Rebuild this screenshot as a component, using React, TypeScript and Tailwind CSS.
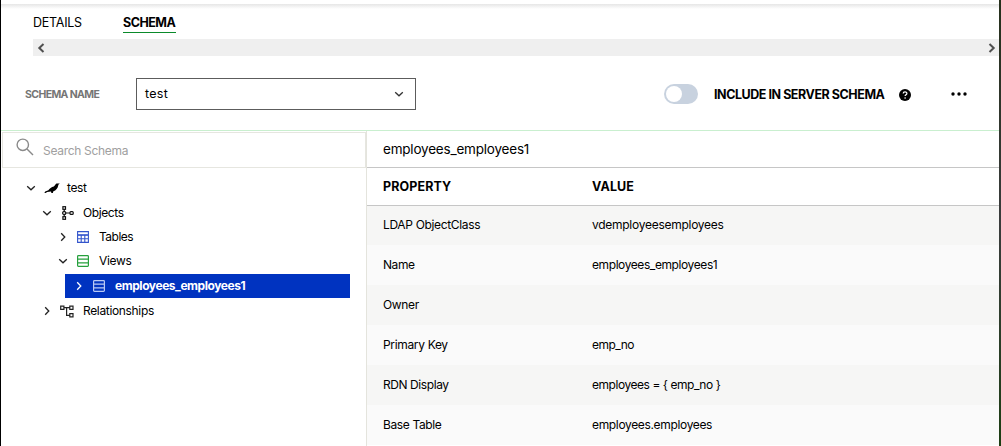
import React from "react";

const INTER = "font-['Inter','Liberation_Sans',sans-serif]";

function Chevron({ dir, className }: { dir: "down" | "right"; className: string }) {
  return (
    <svg viewBox="0 0 10 10" className={`h-[10px] w-[10px] shrink-0 ${className}`} fill="none" stroke="currentColor" strokeWidth="1.3">
      <path d={dir === "down" ? "M1.2 3.2 5 6.8 8.8 3.2" : "M3.2 1.2 6.8 5 3.2 8.8"} />
    </svg>
  );
}

function BirdIcon() {
  return (
    <svg viewBox="0 0 16 12" className="h-3 w-4 shrink-0" fill="#000">
      <path d="M0.4 11 1.2 9.6 4.4 8.2C5.6 6.2 7.4 5 9.8 4.4 11 4 11.2 2.4 12.4 1.6 13.2 1.2 14 1.5 15.8 1.2 15 2 14.5 2.4 14.2 3.4 13.8 6 12 8.4 9.4 9.2L8.8 10.9H7.4L7 9.5 3.2 9.9 1.6 11Z" />
    </svg>
  );
}

function ObjectsIcon() {
  return (
    <svg viewBox="0 0 12 14" className="h-[14px] w-3 shrink-0" fill="none" stroke="#111" strokeWidth="1.2">
      <rect x="0.9" y="0.7" width="2.6" height="2.6" />
      <rect x="0.7" y="5.6" width="3" height="2.8" rx="1" />
      <rect x="0.9" y="10.7" width="2.6" height="2.6" />
      <rect x="8" y="5.6" width="3.2" height="2.8" rx="0.9" />
      <path d="M2.2 3.3v2.3M2.2 8.4v2.3M3.7 7H8" />
    </svg>
  );
}

function TableIcon() {
  return (
    <svg viewBox="0 0 12 12" className="h-3 w-3 shrink-0" fill="none" stroke="#3355cc" strokeWidth="1.1">
      <path d="M0.6 0.6h10.8v10.8H0.6zM0.6 4.3h10.8M0.6 7.8h10.8M4.2 4.3v7.1M7.8 4.3v7.1" />
      <path d="M0.6 3.8h10.8" />
    </svg>
  );
}

function RowsIcon({ className }: { className: string }) {
  return (
    <svg viewBox="0 0 12 12" className={`h-3 w-3 shrink-0 ${className}`} fill="none" stroke="currentColor" strokeWidth="1.2">
      <rect x="0.6" y="0.6" width="10.8" height="10.8" rx="0.8" />
      <path d="M0.6 4.2h10.8M0.6 7.8h10.8" />
    </svg>
  );
}

function RelationsIcon() {
  return (
    <svg viewBox="0 0 14 13" className="h-[13px] w-[14px] shrink-0" fill="none" stroke="#222" strokeWidth="1.2">
      <path d="M0.7 1.2h3.2v3.2H0.7zM9.8 1.2H13v3.2H9.8zM9.8 8.7H13v3.2H9.8zM3.9 2.7h5.9M6.6 2.7v7.6h3.2" />
    </svg>
  );
}

type Node = { label: string; tracking: string; pad: string; height: string; open: boolean; icon: React.ReactNode; gap: string; active?: boolean };

const nodes: Node[] = [
  { label: "test", tracking: "tracking-[-0.35px]", pad: "pl-[25px]", height: "h-[25px]", open: true, icon: <BirdIcon />, gap: "ml-[8px] mr-[7px]" },
  { label: "Objects", tracking: "tracking-[-0.4px]", pad: "pl-[41px]", height: "h-[25px]", open: true, icon: <ObjectsIcon />, gap: "ml-[10px] mr-[9px]" },
  { label: "Tables", tracking: "tracking-[-0.5px]", pad: "pl-[57px]", height: "h-6", open: false, icon: <TableIcon />, gap: "ml-[9px] mr-[10px]" },
  { label: "Views", tracking: "tracking-[-0.34px]", pad: "pl-[57px] pb-px", height: "h-[25px]", open: true, icon: <RowsIcon className="text-[#26a03c]" />, gap: "ml-[9px] mr-[10px]" },
  { label: "employees_employees1", tracking: "tracking-[-0.44px]", pad: "pl-[9px]", height: "h-6", open: false, icon: <RowsIcon className="text-[#b9c9f4]" />, gap: "ml-[9px] mr-[10px]", active: true },
  { label: "Relationships", tracking: "tracking-[-0.34px]", pad: "pl-[41px]", height: "h-[26px]", open: false, icon: <RelationsIcon />, gap: "ml-[8px] mr-[9px]" },
];

const rows = [
  { name: "LDAP ObjectClass", nt: "tracking-[-0.34px]", value: "vdemployeesemployees", vt: "tracking-[-0.27px]" },
  { name: "Name", nt: "tracking-[-0.45px]", value: "employees_employees1", vt: "tracking-[-0.41px]" },
  { name: "Owner", nt: "tracking-[-0.36px]", value: "", vt: "" },
  { name: "Primary Key", nt: "tracking-[-0.34px]", value: "emp_no", vt: "tracking-[-0.5px]" },
  { name: "RDN Display", nt: "tracking-[-0.42px]", value: "employees = { emp_no }", vt: "tracking-[-0.45px]" },
  { name: "Base Table", nt: "tracking-[-0.38px]", value: "employees.employees", vt: "tracking-[-0.34px]" },
];

function Header() {
  return (
    <>
      <div className="h-1 shrink-0" />
      <div className="h-[5px] shrink-0 bg-linear-to-b from-[#e6e6e6] to-white" />
      <nav className="flex h-[30px] shrink-0 items-start pl-8 pt-[5px] text-[12.5px] leading-[18px]">
        <span className="w-[90px] tracking-[-0.25px]">DETAILS</span>
        <span className="h-[19px] w-[53px] border-b border-[#0a8a2a] font-bold tracking-[-0.5px]"><span>SCHEMA</span></span>
      </nav>
      <div className="ml-8 flex h-[17px] shrink-0 items-center justify-between bg-[#efefef] pl-1 pr-[3px] text-[#505050]">
        <svg viewBox="0 0 8 10" className="h-[10px] w-2" fill="none" stroke="currentColor" strokeWidth="2"><path d="M6.5 1 2.3 5 6.5 9" /></svg>
        <svg viewBox="0 0 8 10" className="h-[10px] w-2" fill="none" stroke="currentColor" strokeWidth="2"><path d="M1.5 1 5.7 5 1.5 9" /></svg>
      </div>
      <div className="flex h-[74px] shrink-0 items-center pl-6">
        <span className="w-[111px] pt-[3px] text-[10.5px] font-bold tracking-[-0.62px] text-[#757575]"><span>SCHEMA NAME</span></span>
        <div className="mt-px flex h-8 w-[280px] items-center justify-between border border-[#5c5c5c] pl-2 pr-[11px] text-[12.5px]">
          <span className="pt-px tracking-[0.3px]">test</span>
          <Chevron dir="down" className="text-[#333]" />
        </div>
        <div className="ml-[248px] mt-[2px] flex h-5 w-[34px] items-center rounded-full bg-[#c8d2df] p-[2px]">
          <span className="h-4 w-4 rounded-full bg-white" />
        </div>
        <span className="ml-4 w-[185px] whitespace-nowrap pt-[4px] text-[12.5px] font-bold tracking-[-0.45px]"><span>INCLUDE IN SERVER SCHEMA</span></span>
        <svg viewBox="0 0 12 12" className="mt-1 h-3 w-3">
          <circle cx="6" cy="6" r="6" fill="#000" />
          <path d="M4.2 4.6C4.2 2.4 7.9 2.4 7.9 4.5 7.9 5.8 6.1 5.7 6.1 7.1" fill="none" stroke="#fff" strokeWidth="1.2" />
          <circle cx="6.1" cy="9" r="0.8" fill="#fff" />
        </svg>
        <svg viewBox="0 0 16 4" className="ml-10 mt-[2px] h-1 w-4" fill="#000">
          <circle cx="2" cy="2" r="1.7" /><circle cx="8" cy="2" r="1.7" /><circle cx="14" cy="2" r="1.7" />
        </svg>
      </div>
    </>
  );
}

function Sidebar() {
  return (
    <aside className="flex w-[366px] shrink-0 flex-col border-r border-[#e4e4dd] pt-px">
      <div className="ml-px flex h-9 shrink-0 items-center border border-[#e6e6e0] pl-[13px]">
        <svg viewBox="0 0 18 18" className="-mt-[6px] h-[18px] w-[18px]" fill="none" stroke="#8a8a8a" strokeWidth="1.4">
          <circle cx="6.8" cy="6.8" r="5.7" /><path d="m11 11 6 6" />
        </svg>
        <span className="ml-[9px] pt-[2px] text-[12px] tracking-[-0.3px] text-[#a0a0a0]">Search Schema</span>
      </div>
      <div className="flex flex-col pt-[7px] text-[12px]">
        {nodes.map((n) => (
          <div key={n.label} className={`flex items-center ${n.height} ${n.pad} ${n.active ? "ml-16 w-[285px] bg-[#0033c0] font-bold text-white" : ""}`}>
            <Chevron dir={n.open ? "down" : "right"} className={n.active ? "text-white" : "text-[#222]"} />
            <span className={`flex ${n.gap}`}>{n.icon}</span>
            <span className={n.tracking}>{n.label}</span>
          </div>
        ))}
      </div>
    </aside>
  );
}

function Details() {
  return (
    <main className="flex min-w-0 flex-1 flex-col text-[12px]">
      <div className="flex h-[37px] shrink-0 items-center border-b border-[#c6c6c6] pl-4 text-[13.5px]">
        <span className="tracking-[-0.2px]">employees_employees1</span>
      </div>
      <div className="flex h-[38px] shrink-0 items-center border-b border-[#c6c6c6] pl-4 pt-[2px] text-[12.5px] font-bold">
        <span className="w-[209px]"><span className="tracking-[0.1px]">PROPERTY</span></span>
        <span className="tracking-[0.1px]">VALUE</span>
      </div>
      {rows.map((r, i) => (
        <div key={r.name} className={`flex shrink-0 items-center pb-px pl-4 ${i === 0 ? "h-[39px]" : "h-10"} ${i % 2 === 0 ? "bg-[#f6f6f5]" : "bg-[#fafafa]"}`}>
          <span className="w-[209px]"><span className={r.nt}>{r.name}</span></span>
          <span className={r.vt}>{r.value}</span>
        </div>
      ))}
    </main>
  );
}

export default function App() {
  return (
    <div className={`flex h-[446px] w-[1001px] overflow-hidden bg-white text-black ${INTER}`}>
      <div className="w-px shrink-0 bg-black" />
      <div className="flex min-w-0 flex-1 flex-col">
        <Header />
        <div className="flex min-h-0 flex-1 border-t border-[#c9efcf]">
          <Sidebar />
          <Details />
        </div>
      </div>
      <div className="w-[2px] shrink-0 bg-linear-to-b from-[#26301c] via-[#3a3c3c] to-[#1c3d12]" />
    </div>
  );
}
